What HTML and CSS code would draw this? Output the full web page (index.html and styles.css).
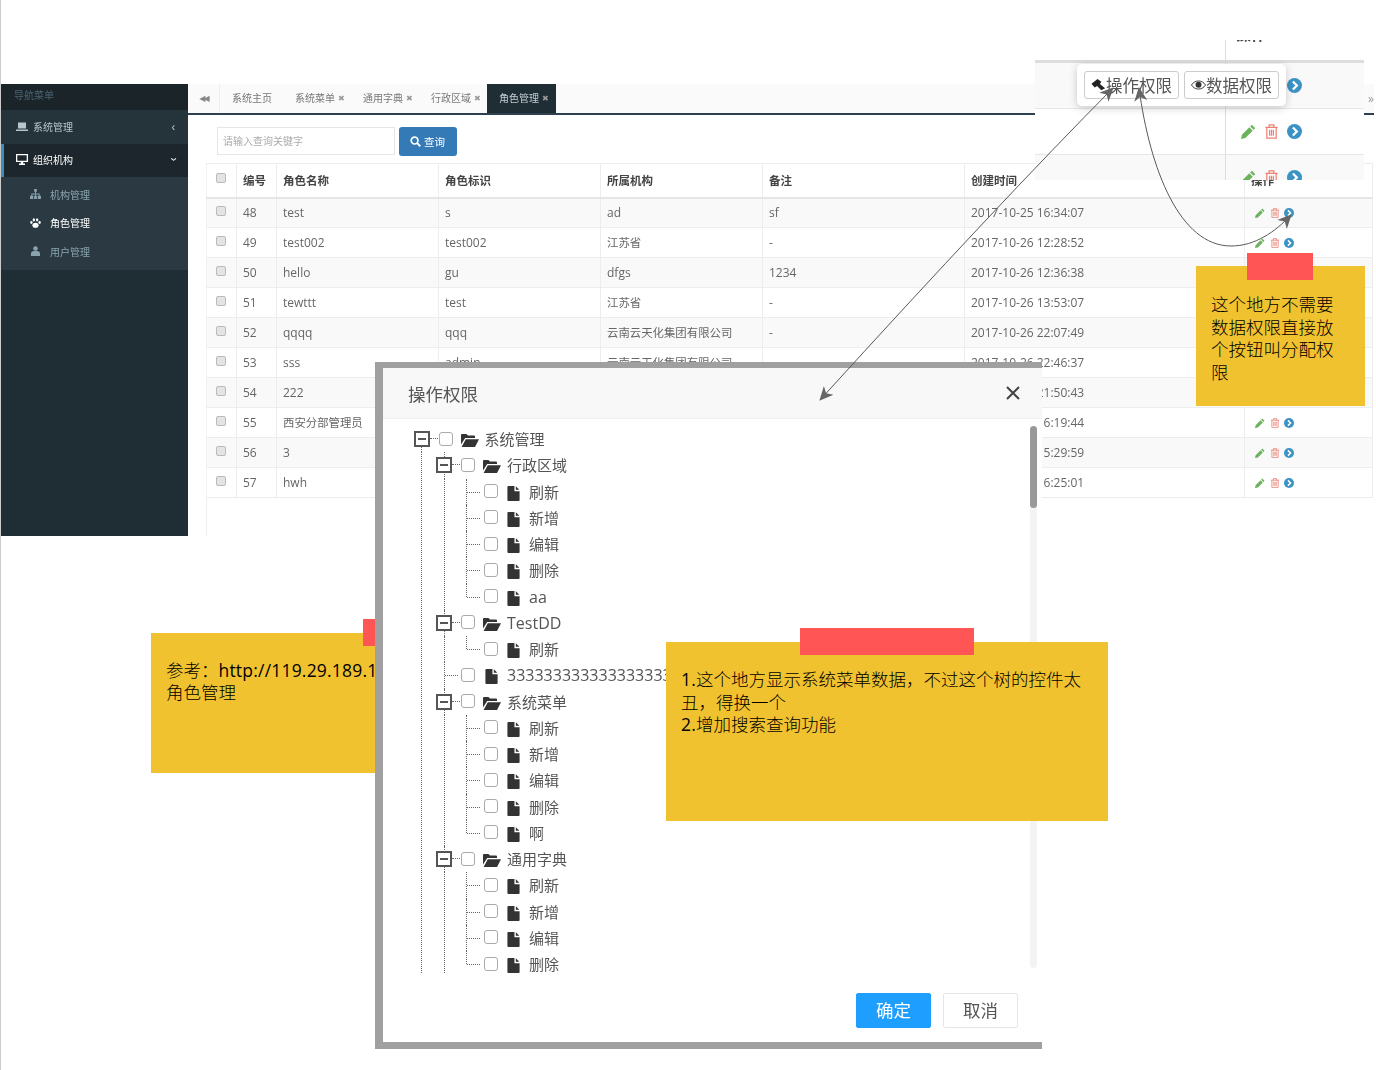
FILE: index.html
```html
<!DOCTYPE html>
<html lang="zh-CN">
<head>
  <meta charset="UTF-8">
  <title>角色管理</title>
  <link rel="stylesheet" href="styles.css">
</head>
<body>
  <svg class="sprite" width="0" height="0">
    <defs>
      <symbol id="i-file" viewBox="0 0 13 16"><path d="M1 0h6.500v5.500H13V15a1 1 0 0 1-1 1H1a1 1 0 0 1-1-1V1a1 1 0 0 1 1-1zM9 .3 12.700 4H9z"/></symbol>
      <symbol id="i-folder" viewBox="0 0 18 14"><path d="M0 2a1 1 0 0 1 1-1h4.500l1.500 1.500h6a1 1 0 0 1 1 1V5H4.200L0 11.500zM4.800 6.300H18L14 14H.6z"/></symbol>
      <symbol id="i-pencil" viewBox="0 0 16 16"><path d="M11.600.8 15.200 4.400 13.400 6.200 9.800 2.600zM8.900 3.500 12.500 7.100 4.600 15 0 16 1 11.400z"/></symbol>
      <symbol id="i-trash" viewBox="0 0 16 16"><path d="M1.500 3.500h13M5.500 3.500V1h5v2.500M3 3.500V15h10V3.500M6 6v6.500M8 6v6.500M10 6v6.500" fill="none" stroke="currentColor" stroke-width="1.300"/></symbol>
      <symbol id="i-go" viewBox="0 0 16 16"><circle cx="8" cy="8" r="8" fill="currentColor"/><path d="M6.300 3.800 10.500 8l-4.200 4.200" fill="none" stroke="#fff" stroke-width="2.400"/></symbol>
      <symbol id="i-pin" viewBox="0 0 16 16"><path d="M7 1 11 4 9.500 6.500 15 11 11 13 6.500 8.500 4 10 .5 6z"/></symbol>
      <symbol id="i-eye" viewBox="0 0 16 10"><path d="M.5 5C2.500 2 5 .7 8 .7S13.500 2 15.500 5c-2 3-4.500 4.300-7.500 4.300S2.500 8 .5 5z" fill="none" stroke="currentColor"/><circle cx="8" cy="4.800" r="3.200"/></symbol>
      <symbol id="i-search" viewBox="0 0 12 12"><circle cx="5" cy="5" r="3.700" fill="none" stroke="currentColor" stroke-width="1.800"/><path d="m7.800 7.800 3.400 3.400" stroke="currentColor" stroke-width="2"/></symbol>
      <symbol id="i-laptop" viewBox="0 0 12 10"><path d="M2 1h8v6H2zM0 8h12v1.500H0z"/></symbol>
      <symbol id="i-desktop" viewBox="0 0 12 11"><path d="M0 0h12v8H7.200v1.500H9V11H3V9.500h1.800V8H0zm1.300 1.300v5.400h9.400V1.300z"/></symbol>
      <symbol id="i-sitemap" viewBox="0 0 12 11"><path d="M4.500 0h3v3H6.500v2H10.500v2.500H12V11H8.500V7.500h1V6h-3v1.500h1V11h-3V7.500h1V6h-3v1.500h1V11H0V7.500h1.500V5h4V3h-1z"/></symbol>
      <symbol id="i-paw" viewBox="0 0 12 11"><ellipse cx="6" cy="8" rx="3.400" ry="2.800"/><ellipse cx="1.500" cy="5" rx="1.300" ry="1.600"/><ellipse cx="10.500" cy="5" rx="1.300" ry="1.600"/><ellipse cx="4.200" cy="2" rx="1.300" ry="1.800"/><ellipse cx="7.800" cy="2" rx="1.300" ry="1.800"/></symbol>
      <symbol id="i-user" viewBox="0 0 10 11"><circle cx="5" cy="2.700" r="2.500"/><path d="M0 11V8.500C0 6.500 1.500 5.500 3 5.500h4c1.500 0 3 1 3 3V11z"/></symbol>
      <marker id="head" viewBox="0 0 14 14" markerWidth="14" markerHeight="14" markerUnits="userSpaceOnUse" refX="13" refY="7" orient="auto-start-reverse"><path d="M14 7 0 .5 4 7 0 13.500z" fill="#666"/></marker>
    </defs>
  </svg>

  <div class="canvas">

    <!-- 角色管理 整页截图 -->
    <div class="shot shot-app">
      <aside class="sidebar">
        <div class="side-title">导航菜单</div>
        <div class="side-item"><svg class="side-ic"><use href="#i-laptop"/></svg><span>系统管理</span><span class="side-arrow">‹</span></div>
        <div class="side-item on"><svg class="side-ic"><use href="#i-desktop"/></svg><span>组织机构</span><span class="side-arrow down">‹</span></div>
        <div class="side-sub">
          <div class="sub-item"><svg class="sub-ic"><use href="#i-sitemap"/></svg><span>机构管理</span></div>
          <div class="sub-item on"><svg class="sub-ic"><use href="#i-paw"/></svg><span>角色管理</span></div>
          <div class="sub-item"><svg class="sub-ic"><use href="#i-user"/></svg><span>用户管理</span></div>
        </div>
      </aside>
      <main class="main">
        <div class="tabs">
          <div class="tab-back">◀◀</div>
          <div class="tab home">系统主页</div>
          <div class="tab">系统菜单<i>✖</i></div>
          <div class="tab">通用字典<i>✖</i></div>
          <div class="tab">行政区域<i>✖</i></div>
          <div class="tab on">角色管理<i>✖</i></div>
          <div class="tab-next">»</div>
        </div>
        <div class="toolbar">
          <div class="search-input">请输入查询关键字</div>
          <div class="search-btn"><svg><use href="#i-search"/></svg>查询</div>
        </div>
        <div class="table-wrap">
          <table class="grid">
            <colgroup><col class="c1"><col class="c2"><col class="c3"><col class="c4"><col class="c5"><col class="c6"><col class="c7"><col></colgroup>
            <thead>
              <tr><th><span class="tick"></span></th><th>编号</th><th>角色名称</th><th>角色标识</th><th>所属机构</th><th>备注</th><th>创建时间</th><th class="th-op">操作</th></tr>
            </thead>
            <tbody>
              <tr><td><span class="tick"></span></td><td>48</td><td>test</td><td>s</td><td>ad</td><td>sf</td><td>2017-10-25 16:34:07</td><td class="ops"><svg class="pen"><use href="#i-pencil"/></svg><svg class="del"><use href="#i-trash"/></svg><svg class="go"><use href="#i-go"/></svg></td></tr>
              <tr><td><span class="tick"></span></td><td>49</td><td>test002</td><td>test002</td><td class="cn">江苏省</td><td>-</td><td>2017-10-26 12:28:52</td><td class="ops"><svg class="pen"><use href="#i-pencil"/></svg><svg class="del"><use href="#i-trash"/></svg><svg class="go"><use href="#i-go"/></svg></td></tr>
              <tr><td><span class="tick"></span></td><td>50</td><td>hello</td><td>gu</td><td>dfgs</td><td>1234</td><td>2017-10-26 12:36:38</td><td class="ops"></td></tr>
              <tr><td><span class="tick"></span></td><td>51</td><td>tewttt</td><td>test</td><td class="cn">江苏省</td><td>-</td><td>2017-10-26 13:53:07</td><td class="ops"></td></tr>
              <tr><td><span class="tick"></span></td><td>52</td><td>qqqq</td><td>qqq</td><td class="cn">云南云天化集团有限公司</td><td>-</td><td>2017-10-26 22:07:49</td><td class="ops"></td></tr>
              <tr><td><span class="tick"></span></td><td>53</td><td>sss</td><td>admin</td><td class="cn">云南云天化集团有限公司</td><td>-</td><td>2017-10-26 22:46:37</td><td class="ops"></td></tr>
              <tr><td><span class="tick"></span></td><td>54</td><td>222</td><td></td><td></td><td></td><td>2017-10-26 21:50:43</td><td class="ops"></td></tr>
              <tr><td><span class="tick"></span></td><td>55</td><td class="cn">西安分部管理员</td><td></td><td></td><td></td><td>2017-10-27 16:19:44</td><td class="ops"><svg class="pen"><use href="#i-pencil"/></svg><svg class="del"><use href="#i-trash"/></svg><svg class="go"><use href="#i-go"/></svg></td></tr>
              <tr><td><span class="tick"></span></td><td>56</td><td>3</td><td></td><td></td><td></td><td>2017-10-27 15:29:59</td><td class="ops"><svg class="pen"><use href="#i-pencil"/></svg><svg class="del"><use href="#i-trash"/></svg><svg class="go"><use href="#i-go"/></svg></td></tr>
              <tr><td><span class="tick"></span></td><td>57</td><td>hwh</td><td></td><td></td><td></td><td>2017-10-27 16:25:01</td><td class="ops"><svg class="pen"><use href="#i-pencil"/></svg><svg class="del"><use href="#i-trash"/></svg><svg class="go"><use href="#i-go"/></svg></td></tr>
            </tbody>
          </table>
        </div>
      </main>
    </div>

    <!-- 操作列放大截图 -->
    <div class="shot shot-ops">
      <div class="ops-row ops-head"><div></div><div class="ops-title">操作</div></div>
      <div class="ops-row alt"><div></div><div class="ops-icons"><svg class="go go-first"><use href="#i-go"/></svg></div></div>
      <div class="ops-row"><div></div><div class="ops-icons"><svg class="pen"><use href="#i-pencil"/></svg><svg class="del"><use href="#i-trash"/></svg><svg class="go"><use href="#i-go"/></svg></div></div>
      <div class="ops-row alt"><div></div><div class="ops-icons"><svg class="pen"><use href="#i-pencil"/></svg><svg class="del"><use href="#i-trash"/></svg><svg class="go"><use href="#i-go"/></svg></div></div>
      <div class="popover">
        <div class="pop-btn"><svg class="pop-pin"><use href="#i-pin"/></svg>操作权限</div>
        <div class="pop-btn"><svg class="pop-eye"><use href="#i-eye"/></svg>数据权限</div>
      </div>
    </div>

    <!-- 便签 -->
    <div class="note note-ref">
      <span class="note-tab"></span>
      参考：<span class="lt">http://119.29.189.1</span><br>角色管理
    </div>

    <!-- 操作权限 弹窗 -->
    <div class="dialog">
      <div class="dlg-head">
        <span>操作权限</span>
        <svg class="dlg-close" viewBox="0 0 14 14"><path d="M1 1l12 12M13 1 1 13"/></svg>
      </div>
      <div class="dlg-body">
        <ul class="tree">
          <li>
            <div class="row"><span class="tg"></span><span class="cb"></span><svg class="ic-folder"><use href="#i-folder"/></svg><span class="txt">系统管理</span></div>
            <ul class="l1">
              <li>
                <div class="row"><span class="tg"></span><span class="cb"></span><svg class="ic-folder"><use href="#i-folder"/></svg><span class="txt">行政区域</span></div>
                <ul class="l2">
                  <li><div class="row leaf"><span class="sw"></span><span class="cb"></span><svg class="ic-file"><use href="#i-file"/></svg><span class="txt">刷新</span></div></li>
                  <li><div class="row leaf"><span class="sw"></span><span class="cb"></span><svg class="ic-file"><use href="#i-file"/></svg><span class="txt">新增</span></div></li>
                  <li><div class="row leaf"><span class="sw"></span><span class="cb"></span><svg class="ic-file"><use href="#i-file"/></svg><span class="txt">编辑</span></div></li>
                  <li><div class="row leaf"><span class="sw"></span><span class="cb"></span><svg class="ic-file"><use href="#i-file"/></svg><span class="txt">删除</span></div></li>
                  <li><div class="row leaf"><span class="sw"></span><span class="cb"></span><svg class="ic-file"><use href="#i-file"/></svg><span class="txt lat">aa</span></div></li>
                </ul>
              </li>
              <li>
                <div class="row"><span class="tg"></span><span class="cb"></span><svg class="ic-folder"><use href="#i-folder"/></svg><span class="txt lat">TestDD</span></div>
                <ul class="l2">
                  <li><div class="row leaf"><span class="sw"></span><span class="cb"></span><svg class="ic-file"><use href="#i-file"/></svg><span class="txt">刷新</span></div></li>
                </ul>
              </li>
              <li><div class="row leaf"><span class="sw"></span><span class="cb"></span><svg class="ic-file mid"><use href="#i-file"/></svg><span class="txt lat">33333333333333333333333</span></div></li>
              <li>
                <div class="row"><span class="tg"></span><span class="cb"></span><svg class="ic-folder"><use href="#i-folder"/></svg><span class="txt">系统菜单</span></div>
                <ul class="l2">
                  <li><div class="row leaf"><span class="sw"></span><span class="cb"></span><svg class="ic-file"><use href="#i-file"/></svg><span class="txt">刷新</span></div></li>
                  <li><div class="row leaf"><span class="sw"></span><span class="cb"></span><svg class="ic-file"><use href="#i-file"/></svg><span class="txt">新增</span></div></li>
                  <li><div class="row leaf"><span class="sw"></span><span class="cb"></span><svg class="ic-file"><use href="#i-file"/></svg><span class="txt">编辑</span></div></li>
                  <li><div class="row leaf"><span class="sw"></span><span class="cb"></span><svg class="ic-file"><use href="#i-file"/></svg><span class="txt">删除</span></div></li>
                  <li><div class="row leaf"><span class="sw"></span><span class="cb"></span><svg class="ic-file"><use href="#i-file"/></svg><span class="txt">啊</span></div></li>
                </ul>
              </li>
              <li>
                <div class="row"><span class="tg"></span><span class="cb"></span><svg class="ic-folder"><use href="#i-folder"/></svg><span class="txt">通用字典</span></div>
                <ul class="l2">
                  <li><div class="row leaf"><span class="sw"></span><span class="cb"></span><svg class="ic-file"><use href="#i-file"/></svg><span class="txt">刷新</span></div></li>
                  <li><div class="row leaf"><span class="sw"></span><span class="cb"></span><svg class="ic-file"><use href="#i-file"/></svg><span class="txt">新增</span></div></li>
                  <li><div class="row leaf"><span class="sw"></span><span class="cb"></span><svg class="ic-file"><use href="#i-file"/></svg><span class="txt">编辑</span></div></li>
                  <li><div class="row leaf"><span class="sw"></span><span class="cb"></span><svg class="ic-file"><use href="#i-file"/></svg><span class="txt">删除</span></div></li>
                </ul>
              </li>
            </ul>
          </li>
        </ul>
        <div class="scrollbar"><div class="thumb"></div></div>
      </div>
      <div class="dlg-foot">
        <div class="btn btn-ok">确定</div>
        <div class="btn">取消</div>
      </div>
    </div>

    <div class="note note-tree">
      <span class="note-tab"></span>
      <span class="lt">1.</span>这个地方显示系统菜单数据，不过这个树的控件太丑，得换一个<br><span class="lt">2.</span>增加搜索查询功能
    </div>

    <div class="note note-btn">
      <span class="note-tab"></span>
      这个地方不需要数据权限直接放个按钮叫分配权限
    </div>

    <!-- 连接箭头 -->
    <svg class="arrows" viewBox="0 0 1376 1070">
      <path d="M1113 88Q1000 202 820 400" marker-start="url(#head)" marker-end="url(#head)"/>
      <path d="M1139 88C1150 170 1180 246 1231 246C1255 246 1275 232 1291 215" marker-start="url(#head)" marker-end="url(#head)"/>
    </svg>
  </div>
</body>
</html>
```

FILE: styles.css
```css
* {
  box-sizing: border-box;
  margin: 0;
  padding: 0;
}
body {
  background: #fff;
  font-family: 'Open Sans', 'Noto Sans CJK SC', sans-serif;
  color: #555;
}
ul { list-style: none; }
.sprite { position: absolute; }

/* 画布 */
.canvas {
  position: relative;
  width: 1376px;
  height: 1070px;
  overflow: hidden;
  border-left: 1px solid #ccc;
}
.shot { filter: blur(0.4px); }

/* 整页截图 */
.shot-app {
  position: absolute;
  left: 0;
  top: 84px;
  width: 1373px;
  height: 452px;
  display: flex;
  background: #fff;
}
.sidebar {
  width: 187px;
  flex: none;
  background: #1f2d35;
  font-size: 10px;
}
.side-title {
  height: 26px;
  line-height: 22px;
  padding-left: 13px;
  background: #1a2429;
  color: #4b646f;
}
.side-item {
  display: flex;
  align-items: center;
  height: 34px;
  padding: 0 13px 2px 15px;
  color: #b8c7ce;
  background: #25333b;
}
.side-item.on {
  height: 33px;
  padding-left: 12px;
  background: #1c262c;
  color: #fff;
  border-left: 3px solid #3c8dbc;
}
.side-ic { width: 12px; height: 11px; margin-right: 5px; fill: currentColor; }
.side-arrow { margin-left: auto; font-size: 12px; }
.side-arrow.down { transform: rotate(-90deg); }
.side-sub {
  height: 93px;
  padding-top: 3px;
  background: #2b3a42;
}
.sub-item {
  display: flex;
  align-items: center;
  height: 28.5px;
  padding-left: 29px;
  color: #8aa4af;
}
.sub-item.on { color: #fff; }
.sub-ic { width: 11px; height: 10px; margin-right: 9px; fill: currentColor; }

.main {
  flex: 1;
  min-width: 0;
  display: flex;
  flex-direction: column;
}
.tabs {
  display: flex;
  height: 31px;
  background: #fafafa;
  border-bottom: 2px solid #2f4050;
  font-size: 10px;
  line-height: 29px;
  color: #777;
}
.tab-back {
  width: 32px;
  text-align: center;
  font-family: 'DejaVu Sans', sans-serif;
  font-size: 8px;
  letter-spacing: -2px;
  border-right: 1px solid #eee;
  color: #888;
}
.tab { padding: 0 7px 0 12px; white-space: nowrap; }
.tab.home { padding-right: 11px; }
.tab i {
  display: inline-block;
  width: 6px;
  margin-left: 3px;
  overflow: hidden;
  font-style: normal;
  font-size: 8px;
  font-family: 'DejaVu Sans', sans-serif;
  vertical-align: top;
  color: #999;
}
.tab.on { padding-right: 8px; background: #1f2d35; color: #c5ced3; }
.tab-next { margin-left: auto; width: 6px; overflow: hidden; color: #999; font-size: 12px; }

.toolbar {
  display: flex;
  gap: 4px;
  padding: 12px 0 0 29px;
}
.search-input {
  width: 178px;
  height: 28px;
  padding-left: 5px;
  line-height: 26px;
  font-size: 10px;
  color: #aaa;
  border: 1px solid #e5e6e7;
}
.search-btn {
  display: flex;
  align-items: center;
  gap: 3px;
  width: 58px;
  height: 29px;
  padding-left: 11px;
  border-radius: 3px;
  background: #337ab7;
  color: #fff;
  font-size: 10.5px;
}
.search-btn svg { width: 11px; height: 11px; }

.table-wrap {
  flex: 1;
  margin: 7px 1px 0 18px;
  border-left: 1px solid #eee;
}
.grid {
  width: calc(100% + 1px);
  margin-left: -1px;
  table-layout: fixed;
  border-collapse: collapse;
  font-size: 12px;
}
.c1 { width: 30px; }
.c2 { width: 40px; }
.c3 { width: 162px; }
.c4 { width: 162px; }
.c5 { width: 162px; }
.c6 { width: 202px; }
.c7 { width: 280px; }
.grid th, .grid td {
  padding: 0 6px;
  text-align: left;
  border: 1px solid #ebedef;
  border-left-color: #f2f2f2;
  white-space: nowrap;
  overflow: hidden;
}
.grid th {
  height: 34px;
  font-size: 11.5px;
  color: #444;
  background: #fff;
  border-bottom: 2px solid #e4e6e8;
}
.grid td { height: 30px; color: #666; }
.grid td.cn { padding-bottom: 2px; font-size: 11.4px; }
.grid tbody tr:nth-child(odd) td { background: #f9f9f9; }
.grid th:first-child, .grid td:first-child { padding-left: 9px; }
.th-op { padding-left: 7px; }
.tick {
  display: block;
  width: 10px;
  height: 10px;
  margin-top: -4px;
  border: 1px solid #bbb;
  border-radius: 2px;
  background: #e4e4e4;
}
.grid td.ops { padding-left: 10px; font-size: 0; }
.ops svg { width: 10px; height: 10px; margin-right: 4.5px; vertical-align: middle; }
.pen { fill: #6bb35c; }
.del { color: #ec8074; }
.go { color: #3b93c5; }

/* 操作列放大截图 */
.shot-ops {
  position: absolute;
  left: 1034px;
  top: 40px;
  width: 329px;
  height: 140px;
  background: #fff;
  overflow: hidden;
}
.ops-row {
  display: grid;
  grid-template-columns: 191px 1fr;
  height: 46px;
  border-bottom: 1px solid #e7e7e7;
}
.ops-row > div:first-child { border-right: 1px solid #ddd; }
.ops-row.alt { background: #f9f9f9; }
.ops-head {
  height: 23px;
  border-bottom: 3px solid #ddd;
}
.ops-title {
  margin-top: -17px;
  padding-left: 10px;
  font-size: 15px;
  font-weight: 700;
  color: #444;
}
.ops-icons {
  display: flex;
  align-items: center;
  padding-left: 15px;
  gap: 8px;
}
.ops-icons svg { width: 15px; height: 15px; }
.go-first { margin-left: 46px; }
.popover {
  position: absolute;
  left: 42px;
  top: 24px;
  display: flex;
  gap: 5px;
  padding: 7px;
  background: #fff;
  border-radius: 5px;
  box-shadow: 0 2px 8px rgba(0, 0, 0, 0.2);
}
.pop-btn {
  display: flex;
  align-items: center;
  width: 95px;
  height: 28px;
  padding-left: 6px;
  border: 1px solid #ccc;
  border-radius: 3px;
  font-size: 16.5px;
  color: #555;
  white-space: nowrap;
}
.pop-pin { width: 15px; height: 15px; fill: #222; }
.pop-eye { width: 15px; height: 10px; color: #333; fill: #333; }

/* 便签 */
.note {
  position: absolute;
  background: #f1c230;
  color: #000;
  font-size: 17.5px;
  font-weight: 300;
  line-height: 22.5px;
}
.note .lt { font-weight: 400; letter-spacing: 0.2px; }
.note-tab {
  position: absolute;
  background: #ff5555;
}
.note-ref {
  left: 150px;
  top: 633px;
  width: 400px;
  height: 140px;
  padding: 25.5px 15px 0;
}
.note-ref .note-tab { left: 212px; top: -14px; width: 100px; height: 27px; }
.note-tree {
  left: 665px;
  top: 642px;
  width: 442px;
  height: 179px;
  padding: 26px 15px 0;
}
.note-tree .note-tab { left: 134px; top: -14px; width: 174px; height: 27px; }
.note-btn {
  left: 1195px;
  top: 266px;
  width: 169px;
  height: 140px;
  padding: 27px 15px 0;
}
.note-btn .note-tab { left: 51px; top: -13px; width: 66px; height: 27px; }

/* 弹窗 */
.dialog {
  position: absolute;
  left: 374px;
  top: 362px;
  width: 667px;
  height: 687px;
  display: flex;
  flex-direction: column;
  background: #fff;
  border: solid #a0a0a0;
  border-width: 6px 0 7px 8px;
  filter: blur(0.3px);
}
.dlg-head {
  display: flex;
  align-items: center;
  justify-content: space-between;
  flex: none;
  height: 51px;
  padding: 0 22px 0 25px;
  background: #f8f8f8;
  border-bottom: 1px solid #eee;
  font-size: 17.5px;
  color: #555;
}
.dlg-close {
  width: 14px;
  height: 14px;
  fill: none;
  stroke: #444;
  stroke-width: 2;
}
.dlg-body {
  flex: none;
  display: flex;
  height: 554px;
  padding-top: 7px;
}
.tree {
  flex: 1;
  min-width: 0;
  height: 547px;
  padding-left: 30.5px;
  overflow: hidden;
  font-size: 15px;
  color: #555;
}
.row {
  position: relative;
  display: flex;
  align-items: center;
  height: 26.25px;
  white-space: nowrap;
}
.txt { margin-top: -1px; }
.txt.lat { margin-top: 0; font-size: 16px; }
.tg {
  position: relative;
  z-index: 1;
  flex: none;
  width: 16px;
  height: 16px;
  margin-right: 9px;
  border: 2px solid #555;
  background: #fff;
}
.tg::before {
  content: "";
  position: absolute;
  left: 2px;
  right: 2px;
  top: 5px;
  border-top: 2px solid #555;
}
.tg::after {
  content: "";
  position: absolute;
  left: 14px;
  width: 8px;
  top: 5px;
  border-top: 1px dotted #666;
}
.sw { flex: none; width: 16px; margin-right: 9px; }
.cb {
  position: relative;
  z-index: 1;
  flex: none;
  width: 14px;
  height: 14px;
  margin-top: -1px;
  border: 1.5px solid #aaa;
  border-radius: 3px;
  background: #fff;
}
.ic-folder { flex: none; width: 18px; height: 14px; margin: 2px 6px 0 8px; fill: #333; }
.ic-file { flex: none; width: 13px; height: 15px; margin: 3px 9px 0 9.5px; fill: #333; }
.ic-file.mid { margin-left: 10px; }

/* 树连接线 */
.l1 {
  position: relative;
  margin-left: 7.5px;
  padding-left: 14px;
  border-left: 1px dotted #666;
}
.l1::before {
  content: "";
  position: absolute;
  left: -1px;
  top: -5px;
  height: 5px;
  border-left: 1px dotted #666;
}
.l1 > li > .row::before, .l2 > li > .row::before {
  content: "";
  position: absolute;
  left: 7.5px;
  top: 0;
  bottom: 0;
  border-left: 1px dotted #666;
}
.l2 > li:last-child > .row::before { bottom: 50%; }
.l2 {
  margin-left: 7.5px;
  padding-left: 14px;
  border-left: 1px dotted #666;
}
.leaf::after {
  content: "";
  position: absolute;
  left: 8.5px;
  width: 13px;
  top: 50%;
  border-top: 1px dotted #666;
}
.scrollbar {
  flex: none;
  width: 7px;
  height: 542px;
  margin: 0 5px 0 0;
  border-radius: 4px;
  background: #f3f3f3;
}
.thumb {
  height: 82px;
  border-radius: 4px;
  background: #999;
}
.dlg-foot {
  flex: 1;
  display: flex;
  justify-content: flex-end;
  gap: 12px;
  padding: 20px 24px 0 0;
}
.btn {
  width: 75px;
  height: 35px;
  line-height: 33px;
  text-align: center;
  font-size: 17.5px;
  color: #555;
  background: #fff;
  border: 1px solid #e6e6e6;
  border-radius: 2px;
}
.btn-ok { background: #1e9fff; border-color: #1e9fff; color: #fff; }

/* 箭头 */
.arrows {
  position: absolute;
  left: -1px;
  top: 0;
  width: 1376px;
  height: 1070px;
  fill: none;
  stroke: #595959;
  stroke-width: 1;
  pointer-events: none;
}
```
